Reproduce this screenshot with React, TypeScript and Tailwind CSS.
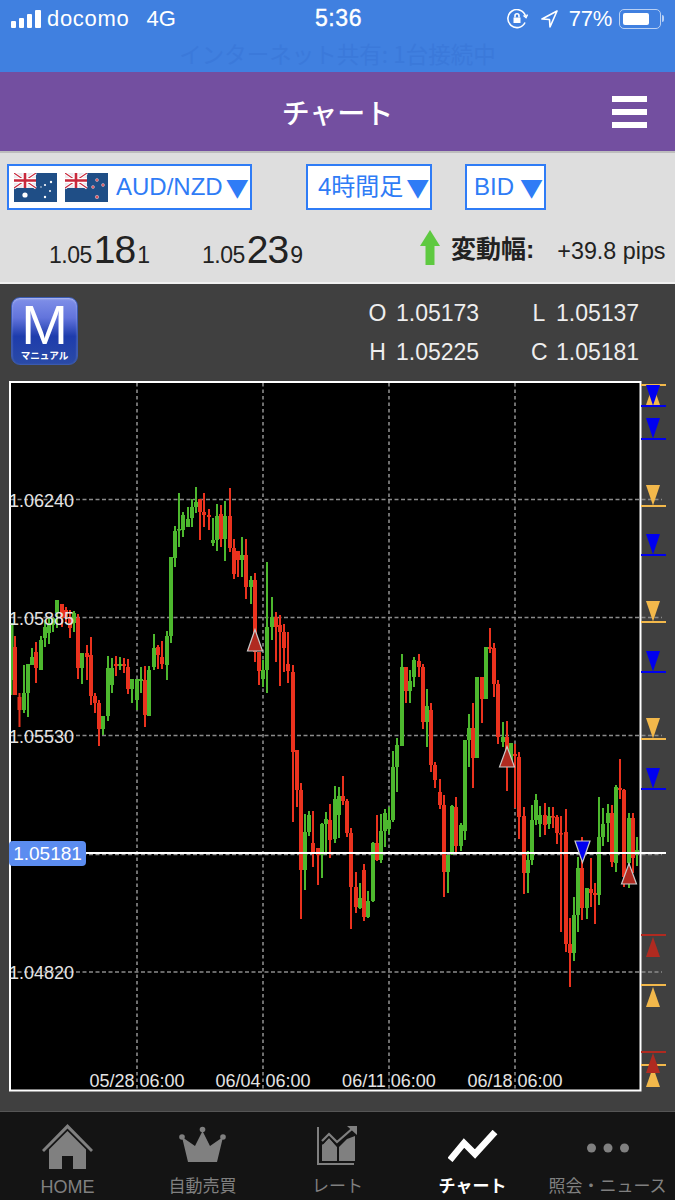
import React from "react";

const SANS = "font-['Liberation_Sans','Noto_Sans_CJK_JP',sans-serif]";

type C = [number, number, number, number, number, "g" | "r"];
const candles: C[] = [
  [11.5, 623, 695, 623, 680, "g"], [15, 636, 695, 647, 695, "r"], [19.5, 693, 727, 697, 710, "r"], [24, 665, 713, 693, 710, "g"],
  [28, 664, 717, 664, 693, "g"], [32, 648, 665, 657, 665, "g"], [36, 642, 683, 652, 668, "r"], [41, 636, 670, 640, 670, "g"],
  [45, 620, 647, 627, 638, "g"], [49, 617, 644, 623, 633, "g"], [53, 618, 632, 618, 625, "g"], [57, 600, 628, 600, 613, "g"],
  [62, 604, 627, 604, 618, "r"], [66, 607, 623, 610, 617, "r"], [70, 610, 638, 618, 628, "r"], [74, 611, 632, 613, 623, "g"],
  [78, 614, 679, 618, 668, "r"], [82, 653, 684, 653, 668, "g"], [87, 645, 680, 653, 657, "r"], [91, 637, 705, 655, 696, "r"],
  [95, 693, 713, 696, 703, "r"], [99, 700, 746, 703, 729, "r"], [103, 716, 735, 716, 729, "g"], [108, 656, 721, 668, 716, "g"],
  [112, 658, 693, 668, 685, "g"], [116, 656, 676, 664, 666, "r"], [120, 657, 670, 664, 666, "g"], [124, 658, 673, 664, 666, "r"],
  [128, 659, 694, 667, 689, "r"], [132, 679, 703, 679, 689, "g"], [137, 679, 710, 679, 700, "g"], [141, 667, 693, 679, 681, "g"],
  [145, 666, 727, 680, 715, "r"], [149, 666, 716, 670, 716, "g"], [154, 634, 670, 648, 667, "g"], [158, 645, 669, 647, 655, "r"],
  [162, 641, 669, 657, 664, "r"], [167, 631, 680, 636, 665, "g"], [171, 557, 643, 557, 636, "g"], [175, 526, 567, 531, 558, "g"],
  [179, 493, 547, 529, 530, "g"], [183, 512, 537, 515, 530, "g"], [188, 507, 527, 519, 527, "g"], [192, 499, 527, 507, 518, "g"],
  [196, 487, 513, 502, 507, "g"], [200, 499, 540, 499, 512, "r"], [204, 493, 527, 512, 515, "r"], [209, 509, 530, 515, 517, "r"],
  [213, 518, 546, 540, 543, "g"], [217, 504, 551, 516, 540, "g"], [221, 505, 547, 514, 539, "r"], [225, 501, 561, 516, 539, "g"],
  [230, 488, 552, 516, 548, "r"], [234, 539, 579, 548, 574, "r"], [238, 551, 577, 551, 560, "r"], [242, 537, 577, 555, 560, "g"],
  [246, 539, 599, 555, 587, "r"], [251, 576, 604, 580, 587, "g"], [255, 573, 662, 580, 652, "r"], [259, 652, 685, 652, 671, "r"],
  [263, 660, 687, 670, 679, "g"], [267, 562, 693, 627, 670, "g"], [272, 597, 640, 617, 627, "g"], [276, 612, 662, 617, 627, "r"],
  [280, 615, 686, 625, 632, "r"], [284, 624, 672, 632, 648, "r"], [288, 632, 683, 664, 671, "r"], [293, 665, 822, 672, 752, "r"],
  [297, 750, 807, 750, 790, "r"], [301, 783, 919, 790, 870, "r"], [305, 814, 890, 832, 870, "g"], [309, 811, 836, 815, 832, "g"],
  [313, 811, 867, 843, 853, "r"], [318, 848, 885, 848, 855, "r"], [322, 823, 878, 824, 855, "g"], [326, 812, 853, 819, 824, "g"],
  [330, 804, 858, 820, 840, "r"], [335, 786, 843, 799, 839, "g"], [339, 787, 838, 796, 815, "g"], [343, 776, 805, 796, 801, "r"],
  [347, 799, 837, 801, 833, "r"], [351, 828, 929, 833, 887, "r"], [356, 872, 913, 887, 907, "r"], [360, 883, 909, 898, 908, "g"],
  [364, 864, 921, 870, 917, "r"], [368, 891, 918, 901, 917, "g"], [373, 842, 902, 843, 901, "g"], [377, 815, 861, 843, 860, "r"],
  [381, 814, 863, 831, 860, "g"], [385, 809, 847, 813, 831, "g"], [389, 807, 834, 820, 829, "g"], [393, 751, 822, 767, 820, "g"],
  [397, 738, 792, 745, 767, "g"], [402, 654, 746, 667, 746, "g"], [406, 667, 703, 667, 691, "r"], [410, 670, 703, 681, 691, "g"],
  [414, 657, 687, 660, 677, "g"], [419, 654, 677, 661, 667, "r"], [423, 664, 729, 667, 722, "r"], [427, 689, 747, 706, 722, "g"],
  [431, 703, 772, 710, 765, "r"], [435, 762, 788, 765, 780, "r"], [440, 779, 809, 792, 805, "r"], [444, 795, 897, 805, 872, "r"],
  [448, 855, 893, 855, 872, "g"], [452, 805, 855, 806, 853, "g"], [456, 797, 853, 807, 846, "r"], [461, 823, 851, 825, 846, "g"],
  [465, 740, 840, 740, 831, "g"], [469, 714, 767, 728, 740, "g"], [473, 703, 788, 728, 758, "r"], [477, 677, 758, 677, 758, "g"],
  [482, 677, 723, 677, 699, "r"], [486, 647, 699, 647, 699, "g"], [490, 628, 653, 647, 649, "r"], [494, 643, 697, 648, 684, "r"],
  [498, 680, 744, 684, 737, "r"], [503, 722, 747, 737, 742, "g"], [507, 721, 791, 737, 755, "r"], [511, 743, 767, 743, 765, "g"],
  [515, 744, 808, 754, 756, "r"], [519, 752, 839, 757, 817, "r"], [524, 807, 894, 816, 873, "r"], [528, 851, 893, 860, 873, "g"],
  [532, 805, 865, 820, 860, "g"], [536, 794, 825, 800, 820, "g"], [540, 806, 837, 815, 824, "g"], [545, 803, 835, 815, 825, "r"],
  [549, 807, 829, 816, 824, "g"], [553, 807, 828, 816, 817, "r"], [557, 815, 844, 817, 833, "r"], [561, 816, 932, 833, 834, "r"],
  [566, 809, 952, 832, 944, "r"], [570, 918, 987, 944, 953, "r"], [574, 897, 961, 915, 953, "g"], [578, 857, 932, 868, 915, "g"],
  [582, 837, 920, 868, 908, "r"], [587, 888, 919, 888, 908, "g"], [591, 858, 907, 889, 893, "r"], [595, 883, 924, 893, 895, "r"],
  [599, 797, 905, 837, 895, "g"], [603, 808, 846, 824, 837, "g"], [608, 804, 842, 813, 823, "g"], [612, 805, 867, 813, 862, "r"],
  [616, 785, 872, 787, 863, "g"], [620, 759, 799, 788, 790, "r"], [624, 789, 887, 790, 877, "r"], [629, 813, 888, 818, 863, "g"],
  [633, 813, 873, 818, 858, "r"], [637, 837, 866, 850, 854, "g"],
];

const ORANGE = "#f2b84b", BLUE = "#0000f0", DRED = "#b02a20";
const downMarks: [number, string][] = [[385, BLUE], [418, BLUE], [485, ORANGE], [534, BLUE], [601, ORANGE], [651, BLUE], [718, ORANGE], [768, BLUE]];

function ChartSvg() {
  return (
    <svg className="absolute inset-0 blur-[0.35px]" width={657} height={711} viewBox="9 381 657 711">
      {[137, 263, 389, 515].map((x) => (
        <line key={x} x1={x} x2={x} y1={383} y2={1090} stroke="#8a8a8a" strokeWidth={1.6} strokeDasharray="3.5 3" />
      ))}
      {[499.5, 617.5, 735.5, 854.5, 972].map((y) => (
        <line key={y} x1={11} x2={662} y1={y} y2={y} stroke="#8a8a8a" strokeWidth={1.4} strokeDasharray="4 2.5" />
      ))}
      {candles.map(([x, a, b, c, d, k], i) => {
        const col = k === "g" ? "#4db82e" : "#ea321e";
        return (
          <g key={i} fill={col}>
            <rect x={x - 1} y={a} width={2} height={b - a} />
            <rect x={x - 2} y={c} width={4} height={Math.max(d - c, 1.6)} />
          </g>
        );
      })}
      <line x1={86} x2={666} y1={853} y2={853} stroke="#fff" strokeWidth={2} />
      <rect x={10} y={382} width={630.5} height={708.5} fill="none" stroke="#fff" strokeWidth={2} />
      <polygon points="255,629.5 247.5,651 262.5,651" fill={DRED} stroke="#c9c9c9" strokeWidth={1.2} />
      <polygon points="507,746.5 499.5,767 514.5,767" fill={DRED} stroke="#c9c9c9" strokeWidth={1.2} />
      <polygon points="629,863.5 621.5,884 636.5,884" fill={DRED} stroke="#c9c9c9" strokeWidth={1.2} />
      <polygon points="575,841 590,841 582.5,862.5" fill={BLUE} stroke="#c9c9c9" strokeWidth={1.2} />
      <polygon points="653,385 646,405 660,405" fill={ORANGE} />
      <line x1={641} x2={666} y1={385} y2={385} stroke={ORANGE} strokeWidth={2} />
      {downMarks.map(([y, c]) => (
        <g key={y}>
          <polygon points={`646,${y} 660,${y} 653,${y + 20.5}`} fill={c} />
          <line x1={641} x2={666} y1={y + 21} y2={y + 21} stroke={c} strokeWidth={2} />
        </g>
      ))}
      <line x1={641} x2={666} y1={935} y2={935} stroke={DRED} strokeWidth={2} />
      <polygon points="653,937 646,957 660,957" fill={DRED} />
      <line x1={641} x2={666} y1={985} y2={985} stroke={ORANGE} strokeWidth={2} />
      <polygon points="653,987 646,1007 660,1007" fill={ORANGE} />
      <line x1={641} x2={666} y1={1065} y2={1065} stroke={ORANGE} strokeWidth={2} />
      <polygon points="653,1067 646,1087 660,1087" fill={ORANGE} />
      <line x1={641} x2={666} y1={1052} y2={1052} stroke={DRED} strokeWidth={2} />
      <polygon points="653,1053 646,1073 660,1073" fill={DRED} />
    </svg>
  );
}

function AuFlag({ nz }: { nz?: boolean }) {
  return (
    <svg width={43} height={29} viewBox="0 0 43 29" className="block shrink-0">
      <rect width={43} height={29} fill="#1f4e86" />
      <rect width={22} height={15} fill="#e8e8ee" />
      <g stroke="#fff" strokeWidth={3}><path d="M0 0L22 15M22 0L0 15" /></g>
      <g stroke="#c8283c" strokeWidth={1.1}><path d="M0 0L22 15M22 0L0 15" /></g>
      <path d="M11 0V15M0 7.5H22" stroke="#fff" strokeWidth={5} />
      <path d="M11 0V15M0 7.5H22" stroke="#c8283c" strokeWidth={2.6} />
      {nz ? (
        <g fill="#d8505a" stroke="#fff" strokeWidth={0.4}>
          <circle cx={32} cy={7} r={1.5} /><circle cx={38} cy={12} r={1.5} /><circle cx={28} cy={14} r={1.5} /><circle cx={32} cy={24} r={1.7} />
        </g>
      ) : (
        <g fill="#fff">
          <circle cx={11} cy={22} r={2.6} /><circle cx={31} cy={12} r={1.1} /><circle cx={37} cy={9} r={1.2} /><circle cx={36} cy={18} r={1} /><circle cx={31} cy={24} r={1.2} /><circle cx={27} cy={14} r={0.7} />
        </g>
      )}
    </svg>
  );
}

function Select({ className, children }: { className: string; children: React.ReactNode }) {
  return (
    <div className={`h-[46px] border-2 border-[#2f7cf6] bg-white flex items-center text-[24px] leading-none text-[#2f7cf6] ${className}`}>
      {children}
    </div>
  );
}

function Caret({ className }: { className: string }) {
  return <span className={`text-[23px] leading-none text-[#2f7cf6] font-['Noto_Sans_CJK_JP',sans-serif] ${className}`}>▼</span>;
}

function Price({ a, b, c, className }: { a: string; b: string; c: string; className: string }) {
  return (
    <div className={`flex items-baseline text-[#222] leading-none ${className}`}>
      <span className="text-[23px] tracking-[-0.5px]">{a}</span>
      <span className="text-[39px] ml-[2px] tracking-[-1px]">{b}</span>
      <span className="text-[23px] ml-[2px]">{c}</span>
    </div>
  );
}

function Ohlc({ k, v, kw }: { k: string; v: string; kw: string }) {
  return (
    <div className="flex items-center text-[23px] leading-none text-[#eeeeee]">
      <span className={`text-center ${kw}`}>{k}</span>
      <span>{v}</span>
    </div>
  );
}

function Tab({ label, active, icon, cls }: { label: string; active?: boolean; icon: React.ReactNode; cls?: string }) {
  return (
    <div className="w-[135px] flex flex-col items-center">
      <div className="h-[57px] flex items-center justify-center">{icon}</div>
      <div className={`leading-none whitespace-nowrap mt-[9px] ${cls ?? "text-[17px]"} ${active ? "text-white font-bold" : "text-[#808080]"}`}>{label}</div>
    </div>
  );
}

export default function App() {
  return (
    <div className={`w-[675px] h-[1200px] overflow-hidden flex flex-col ${SANS}`}>
      <div className="h-[72px] bg-[#4080e0] text-white shrink-0">
        <div className="h-[37px] grid grid-cols-[1fr_auto_1fr] items-center">
          <div className="flex items-center pl-[11px]">
            <svg width={30} height={18} viewBox="0 0 30 18" fill="#fff">
              <rect x={0} y={11} width={5} height={7} rx={1} /><rect x={8} y={8} width={5} height={10} rx={1} />
              <rect x={16} y={4} width={5} height={14} rx={1} /><rect x={24} y={0} width={6} height={18} rx={1} />
            </svg>
            <span className="ml-[6px] text-[22px] tracking-[0.7px]">docomo</span>
            <span className="ml-[17px] text-[22px]">4G</span>
          </div>
          <div className="text-[23px] tracking-[0.6px] [-webkit-text-stroke:0.4px_white] ml-[2px]">5:36</div>
          <div className="flex items-center justify-end pr-[11px]">
            <svg width={21} height={20} viewBox="0 0 21 20" fill="none" stroke="#fff" strokeWidth={1.6}>
              <path d="M18 13.5A9 9 0 1 1 18.5 7" />
              <path d="M16.5 6.5L19 8.5L20.5 5.5" />
              <rect x={6.5} y={8.5} width={7} height={5.5} fill="#fff" stroke="none" />
              <path d="M8 8.5V6.8a2 2 0 0 1 4 0V8.5" />
            </svg>
            <svg className="ml-[13px]" width={17} height={18} viewBox="0 0 17 18" fill="none" stroke="#fff" strokeWidth={1.6}>
              <path d="M16 1L1 9L8.5 9.5L9 17Z" strokeLinejoin="round" />
            </svg>
            <span className="ml-[11px] text-[22px] tracking-[-0.3px]">77%</span>
            <div className="ml-[7px] w-[42px] h-[20px] rounded-[5px] border border-[#b9d0f4] p-[3px]">
              <div className="h-full w-[77%] bg-white rounded-[2px]" />
            </div>
            <div className="ml-[1px] w-[2px] h-[7px] bg-[#b9d0f4] rounded-r-sm" />
          </div>
        </div>
        <div className="h-[35px] text-center text-[22.5px] leading-[32px] text-[#3b79da] font-['Noto_Sans_CJK_JP',sans-serif]">インターネット共有: 1台接続中</div>
      </div>

      <div className="h-[79px] bg-[#734fa0] shrink-0 grid grid-cols-[1fr_auto_1fr] items-center">
        <div />
        <div className="text-white text-[28px] font-medium font-['Noto_Sans_CJK_JP',sans-serif]">チャート</div>
        <div className="flex justify-end pr-[28px]">
          <div className="w-[35px] flex flex-col gap-[7px]">
            <div className="h-[6px] bg-white" /><div className="h-[6px] bg-white" /><div className="h-[6px] bg-white" />
          </div>
        </div>
      </div>

      <div className="h-[133px] shrink-0 bg-[#dedede] border-t-2 border-t-[#bdbdbd] border-b-2 border-b-[#f0f0f0]">
        <div className="flex items-center pt-[11px] pl-[7px]">
          <Select className="w-[245px] pl-[5px] gap-[8px]">
            <AuFlag /><AuFlag nz />
            <span className="flex items-center"><span>AUD/NZD</span><Caret className="ml-[3px]" /></span>
          </Select>
          <Select className="ml-[54px] w-[126px] pl-[10px]">
            <span>4時間足</span><Caret className="ml-[3px]" />
          </Select>
          <Select className="ml-[33px] w-[81px] pl-[7px]">
            <span>BID</span><Caret className="ml-[6px]" />
          </Select>
        </div>
        <div className="flex items-baseline mt-[20px] h-[40px]">
          <Price className="ml-[49px] w-[153px]" a="1.05" b="18" c="1" />
          <Price className="w-[100px]" a="1.05" b="23" c="9" />
          <svg className="ml-[118px] self-start" width={20} height={35} viewBox="0 0 20 35">
            <path d="M10 0L20 16H14.5V35H5.5V16H0Z" fill="#5ec940" />
          </svg>
          <span className="ml-[11px] self-start mt-[3px] text-[25px] leading-[32px] font-bold text-[#222]">変動幅:</span>
          <span className="ml-[23px] self-start mt-[5px] text-[23.3px] leading-[32px] text-[#222]">+39.8 pips</span>
        </div>
      </div>

      <div className="flex-1 bg-[#404040] flex flex-col">
        <div className="h-[97px] shrink-0 flex">
          <div className="ml-[11px] mt-[13px] w-[67px] h-[68px] rounded-[9px] border border-[#3a5ab0] bg-[linear-gradient(180deg,#8090e8_0%,#6274dc_30%,#1e3cac_58%,#2a4aa6_100%)] flex flex-col items-center shadow-[inset_0_1px_2px_rgba(255,255,255,0.4)]">
            <div className="text-[56px] leading-[47px] mt-[3px] text-white">M</div>
            <div className="text-[9.6px] leading-none font-bold text-white font-['Noto_Sans_CJK_JP',sans-serif] mt-[3px]">マニュアル</div>
          </div>
          <div className="ml-[290px] mt-[10px] grid grid-cols-[163px_auto] grid-rows-[39px_39px] items-center">
            <Ohlc k="O" v="1.05173" kw="w-[19px] mr-[9px]" />
            <Ohlc k="L" v="1.05137" kw="w-[16px] mr-[9px]" />
            <Ohlc k="H" v="1.05225" kw="w-[19px] mr-[9px]" />
            <Ohlc k="C" v="1.05181" kw="w-[16px] mr-[9px]" />
          </div>
        </div>
        <div className="relative ml-[9px] w-[657px] h-[711px] shrink-0">
          <div className="absolute left-[1px] top-[1px] w-[631px] h-[709px] bg-black" />
          <ChartSvg />
          {[
            ["1.06240", 110], ["1.05885", 228], ["1.05530", 346], ["1.04820", 582],
          ].map(([t, y]) => (
            <div key={t as string} className="absolute left-0 text-[18px] leading-[20px] text-[#e4e4e4]" style={{ top: (y as number) }}>{t}</div>
          ))}
          {[["05/28 06:00", 128], ["06/04 06:00", 254], ["06/11 06:00", 380], ["06/18 06:00", 506]].map(([t, x]) => (
            <div key={t as string} className="absolute top-[690px] -translate-x-1/2 text-[18px] leading-[20px] text-[#e4e4e4] whitespace-nowrap" style={{ left: x as number }}>{t}</div>
          ))}
          <div className="absolute left-0 top-[460px] w-[77px] h-[25px] rounded-[4px] bg-[#5b8cf0] text-white text-[19px] leading-[26px] text-center">1.05181</div>
        </div>
        <div className="flex-1" />
        <div className="h-[89px] shrink-0 bg-[#141414] border-t border-t-[#555] flex">
          <Tab label="HOME" cls="text-[18px]" icon={
            <svg className="mt-[12px]" width={51} height={45} viewBox="0 0 51 45" fill="#808080">
              <path d="M25.5 0L51 26L49 28L25.5 4.5L2 28L0 26Z" />
              <path d="M25.5 7L44 25.5V45H31V32H20V45H7V25.5Z" />
            </svg>} />
          <Tab label="自動売買" icon={
            <svg className="mt-[7px]" width={47} height={36} viewBox="0 0 47 36" fill="#808080">
              <circle cx={23.5} cy={3.5} r={2.8} /><circle cx={3} cy={11} r={2.8} /><circle cx={44} cy={11} r={2.8} />
              <path d="M23.5 5L31 20L44 11L38 36H9L3 11L16 20Z" />
            </svg>} />
          <Tab label="レート" icon={
            <svg className="mt-[10px]" width={41} height={39} viewBox="0 0 41 39" fill="#808080">
              <path d="M1 1V38H37" fill="none" stroke="#808080" strokeWidth={2} />
              <path d="M5 35V19L12 12L20 21V35Z" /><path d="M22 35V21L30 13L38 10V35Z" />
              <path d="M5 17L12 9L20 18L37 2" fill="none" stroke="#141414" strokeWidth={3.5} />
              <path d="M5 15L12 8L20 16L36 2" fill="none" stroke="#808080" strokeWidth={2.2} />
              <path d="M30 0H40V9Z" />
            </svg>} />
          <Tab label="チャート" active icon={
            <svg className="mt-[11px]" width={50} height={32} viewBox="0 0 50 32" fill="none">
              <path d="M2 30L16 13L27 24L47 2" stroke="#fff" strokeWidth={6.5} />
            </svg>} />
          <Tab label="照会・ニュース" icon={
            <svg className="mt-[14px]" width={42} height={10} viewBox="0 0 42 10" fill="#808080">
              <circle cx={4.5} cy={5} r={4.5} /><circle cx={21} cy={5} r={4.5} /><circle cx={37.5} cy={5} r={4.5} />
            </svg>} />
        </div>
      </div>
    </div>
  );
}
